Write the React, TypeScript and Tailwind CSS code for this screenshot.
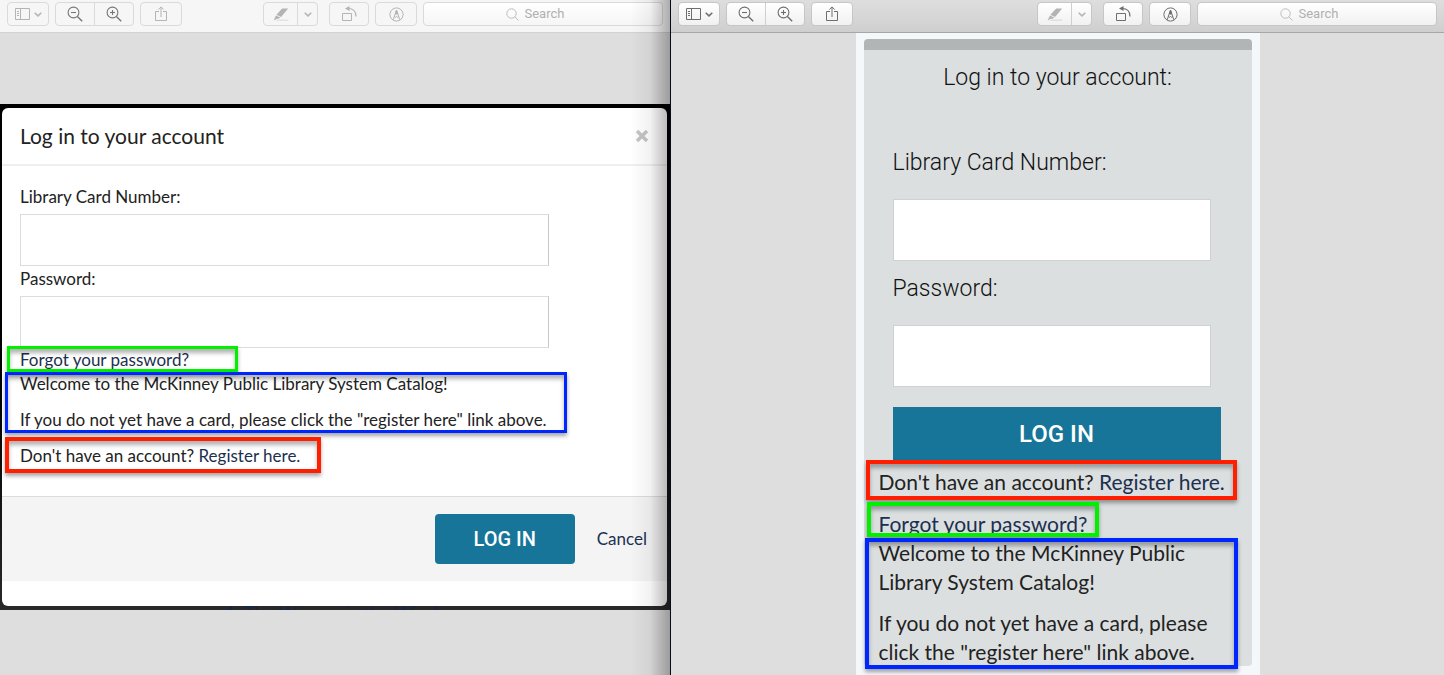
import { useId } from "react";
import type { ReactNode } from "react";
import clsx from "clsx";

function SidebarIcon() {
  return (
    <svg width="15" height="12" viewBox="0 0 15 12" fill="none" stroke="currentColor" aria-hidden="true">
      <path d="M.5.5h14v11H.5zM5.5.5v11M2 3.5h2M2 5.5h2M2 7.5h2" />
    </svg>
  );
}

function ChevronIcon() {
  return (
    <svg width="8" height="5" viewBox="0 0 8 5" fill="none" stroke="currentColor" strokeWidth="1.5" aria-hidden="true">
      <path d="M.7.7 4 3.9 7.3.7" />
    </svg>
  );
}

function MagnifierIcon({ plus = false }: { plus?: boolean }) {
  return (
    <svg width="16" height="16" viewBox="0 0 16 16" fill="none" stroke="currentColor" strokeWidth="1.1" aria-hidden="true">
      <circle cx="6.5" cy="6.5" r="5.4" />
      <path d="m10.4 10.4 4.8 4.8" strokeWidth="1.4" />
      <path d="M4 6.5h5" />
      {plus && <path d="M6.5 4v5" />}
    </svg>
  );
}

function ShareIcon() {
  return (
    <svg width="12" height="16" viewBox="0 0 12 16" fill="none" stroke="currentColor" aria-hidden="true">
      <path d="M4 5.5H.5v9h11v-9H8M6 11V1M3.3 3.6 6 .9l2.7 2.7" />
    </svg>
  );
}

function MarkerIcon() {
  return (
    <svg width="16" height="13" viewBox="0 0 16 13" fill="currentColor" aria-hidden="true">
      <path d="M9.2.6h6L8.1 8.9 3.4 6.8zM3 7.4l4.3 2-1.8 1.4-2.1.2L.6 12.4l1.6-3.3z" />
      <path d="M4.5 11.7h10.8v.8H2.5z" opacity=".6" />
    </svg>
  );
}

function RotateIcon() {
  return (
    <svg width="15" height="16" viewBox="0 0 15 16" fill="none" stroke="currentColor" aria-hidden="true">
      <path d="M.5 7.5h9v7h-9z" />
      <path d="M6 2.5c4.5 0 8 2.5 8 8" strokeWidth="1.2" />
      <path d="M3 2.5 7.5 0v5z" fill="currentColor" stroke="none" />
    </svg>
  );
}

function MarkupIcon() {
  return (
    <svg width="15" height="15" viewBox="0 0 15 15" fill="none" stroke="currentColor" aria-hidden="true">
      <circle cx="7.5" cy="7.5" r="6.6" />
      <path d="M4.2 12.8 7.5 3l3.3 9.8M5.3 9.5l1.4.8.8-.8.8.8 1.4-.8" />
      <path d="M7.5 3.2 6.5 7h2z" fill="currentColor" />
    </svg>
  );
}

function SearchIcon() {
  return (
    <svg width="13" height="13" viewBox="0 0 13 13" fill="none" stroke="currentColor" aria-hidden="true">
      <circle cx="5.5" cy="5.5" r="4.7" />
      <path d="m9 9 3.5 3.5" />
    </svg>
  );
}

function ToolButton({ label, className, children }: { label: string; className?: string; children: ReactNode }) {
  return (
    <button type="button" aria-label={label} className={clsx("flex h-full items-center justify-center", className)}>
      {children}
    </button>
  );
}

function Toolbar({ active = false }: { active?: boolean }) {
  const group = clsx(
    "flex h-6 shrink-0 items-center rounded border",
    active ? "border-[#c6c6c6] bg-linear-to-b from-white to-[#f1f1f1]" : "border-[#dadada] bg-[#f6f6f6]",
  );
  const tone = active ? "text-[#6e6e6e]" : "text-[#b4b4b4]";
  const zoomTone = active ? "text-[#6e6e6e]" : "text-[#777777]";
  const split = active ? "border-r border-[#cfcfcf]" : "border-r border-[#dadada]";
  return (
    <div
      role="toolbar"
      aria-label="Viewer tools"
      className={clsx(
        "flex h-[33px] items-start border-b px-[7px] pt-0.5",
        active ? "border-[#a6a6a6] bg-linear-to-b from-[#dedede] to-[#cfcfcf]" : "border-[#d2d2d2] bg-[#f6f6f6]",
      )}
    >
      <div className={clsx(group, tone, "w-[42px]")}>
        <ToolButton label="Sidebar" className="w-full gap-1">
          <SidebarIcon />
          <ChevronIcon />
        </ToolButton>
      </div>
      <div className={clsx(group, zoomTone, "ml-1.5 w-[79px]")}>
        <ToolButton label="Zoom out" className={clsx("flex-1", split)}>
          <MagnifierIcon />
        </ToolButton>
        <ToolButton label="Zoom in" className="flex-1">
          <MagnifierIcon plus />
        </ToolButton>
      </div>
      <div className={clsx(group, tone, "ml-1.5 w-[42px]")}>
        <ToolButton label="Share" className="w-full">
          <ShareIcon />
        </ToolButton>
      </div>
      <div className={clsx(group, "ml-auto w-[55px] text-[#b4b4b4]")}>
        <ToolButton label="Highlight" className={clsx("w-[34px]", split)}>
          <MarkerIcon />
        </ToolButton>
        <ToolButton label="Highlight colours" className="flex-1">
          <ChevronIcon />
        </ToolButton>
      </div>
      <div className={clsx(group, tone, "ml-[11px] w-10")}>
        <ToolButton label="Rotate" className="w-full">
          <RotateIcon />
        </ToolButton>
      </div>
      <div className={clsx(group, tone, "ml-1.5 w-[42px]")}>
        <ToolButton label="Markup" className="w-full">
          <MarkupIcon />
        </ToolButton>
      </div>
      <label
        className={clsx(
          group,
          "ml-1.5 w-60 justify-center gap-1.5 text-[#bcbcbc]",
          !active && "bg-linear-to-b from-white to-[#f6f6f6]",
        )}
      >
        <SearchIcon />
        <input
          type="text"
          aria-label="Search"
          placeholder="Search"
          className="w-14 bg-transparent font-[Roboto,sans-serif] text-[13px] leading-5 outline-none placeholder:text-[#b0b0b0]"
        />
      </label>
    </div>
  );
}

/** Coloured rectangle drawn over the block that it annotates. */
function Callout({ className }: { className: string }) {
  return (
    <span
      aria-hidden="true"
      className={clsx(
        "pointer-events-none absolute shadow-[0_3px_4px_rgba(0,0,0,0.35),inset_0_4px_4px_rgba(0,0,0,0.3)]",
        className,
      )}
    />
  );
}

function Field({
  label,
  type,
  labelClass,
  inputClass,
}: {
  label: string;
  type: string;
  labelClass: string;
  inputClass: string;
}) {
  const id = useId();
  return (
    <div>
      <label htmlFor={id} className={clsx("block", labelClass)}>
        {label}
      </label>
      <input id={id} type={type} className={clsx("block max-w-full bg-white px-3 outline-none", inputClass)} />
    </div>
  );
}

const link = "text-[#1b3050]";

function DesktopDialog() {
  const label = "pt-0.5 pb-1.5 leading-[22px] text-[#222]";
  const input = "h-[52px] w-[529px] border border-[#dcdcdc] border-r-[#c8c8c8]";
  return (
    <div className="bg-linear-to-b from-black from-30% to-[#29292b] pt-1 pr-[3px] pl-0.5">
      <section className="rounded-md bg-white pb-[25px]">
        <header className="flex h-[58px] items-center justify-between border-b-2 border-[#efefef] px-[18px]">
          <h1 className="text-[21px] text-[#222]">Log in to your account</h1>
          <button type="button" aria-label="Close" className="text-[#c4c4c4]">
            <svg width="14" height="14" viewBox="0 0 14 14" stroke="currentColor" strokeWidth="3.4" aria-hidden="true">
              <path d="m2 2 10 10M12 2 2 12" />
            </svg>
          </button>
        </header>
        <form onSubmit={(e) => e.preventDefault()} className="text-[17px]">
          <div className="px-[18px] pt-[18px] pb-7">
            <Field label="Library Card Number:" type="text" labelClass={label} inputClass={input} />
            <Field label="Password:" type="password" labelClass={label} inputClass={input} />
            <p className="relative leading-6">
              <a href="#forgot" className={link}>Forgot your password?</a>
              <Callout className="-top-0.5 -left-[13px] h-[26px] w-[231px] border-3 border-[#00f000]" />
            </p>
            <div className="relative leading-6 text-[#222]">
              <p>Welcome to the McKinney Public Library System Catalog!</p>
              <p className="mt-3">If you do not yet have a card, please click the "register here" link above.</p>
              <Callout className="top-0 -left-[15px] h-[61px] w-[562px] border-3 border-[#0026ff]" />
            </div>
            <p className="relative mt-3 leading-6 text-[#222]">
              Don't have an account? <a href="#register" className={link}>Register here.</a>
              <Callout className="-top-[7px] -left-[15px] h-9 w-[316px] border-4 border-[#ff1e00]" />
            </p>
          </div>
          <footer className="flex h-[85px] items-center justify-end gap-[22px] border-t border-[#dcdcdc] bg-[#f4f4f4] px-5">
            <button
              type="submit"
              className="h-[50px] w-[140px] rounded bg-[#167599] font-[Roboto,sans-serif] text-xl font-medium text-white"
            >
              LOG IN
            </button>
            <a href="#cancel" className={link}>Cancel</a>
          </footer>
        </form>
      </section>
      <div className="h-1 overflow-hidden pl-[223px] text-lg leading-3 whitespace-nowrap text-[#14284a]">
        1. The Woman in the Window
      </div>
    </div>
  );
}

function MobileForm() {
  const label = "pt-1 pb-3 font-[Roboto,sans-serif] text-[23px] leading-[48px] font-light text-[#111]";
  const input = "h-[62px] w-[318px] border border-[#cfd2d3]";
  return (
    <div className="mx-auto w-[404px] max-w-full flex-1 bg-[#f4f8fb] px-2 pt-1.5">
      <section className="rounded-sm border-t-[11px] border-[#b1b5b6] bg-[#dbdfe0]">
        <h2 className="pt-3 text-center font-[Roboto,sans-serif] text-[23px] leading-8 font-light text-[#111]">
          Log in to your account:
        </h2>
        <form onSubmit={(e) => e.preventDefault()} className="px-[15px] text-[21px] leading-[29px]">
          <div className="pt-[41px] pr-4 pl-[14px]">
            <Field label="Library Card Number:" type="text" labelClass={label} inputClass={input} />
            <Field label="Password:" type="password" labelClass={label} inputClass={input} />
            <button
              type="submit"
              className="mt-5 block h-[54px] w-full bg-[#167599] font-[Roboto,sans-serif] text-2xl font-medium text-white"
            >
              LOG IN
            </button>
          </div>
          <p className="relative mt-1.5 text-[#222]">
            Don't have an account? <a href="#register" className={link}>Register here.</a>
            <Callout className="-top-[7px] -left-[13px] h-10 w-[371px] border-4 border-[#ff1e00]" />
          </p>
          <p className="relative mt-[13px]">
            <a href="#forgot" className={link}>Forgot your password?</a>
            <Callout className="-top-[7px] -left-3 h-[35px] w-[232px] border-4 border-[#00f000]" />
          </p>
          <div className="relative text-[#222]">
            <p className="pr-5">Welcome to the McKinney Public Library System Catalog!</p>
            <p className="mt-3 pr-5">If you do not yet have a card, please click the "register here" link above.</p>
            <Callout className="top-0 -left-3.5 h-[131px] w-[373px] border-4 border-[#0026ff]" />
          </div>
        </form>
      </section>
    </div>
  );
}

export default function App() {
  return (
    <div className="grid min-h-screen grid-cols-[670fr_1px_773fr] overflow-hidden bg-[#dedede] font-[Lato,sans-serif]">
      <main className="relative min-w-0">
        <Toolbar />
        <div className="pt-[71px]">
          <DesktopDialog />
        </div>
        <div
          aria-hidden="true"
          className="pointer-events-none absolute inset-y-0 right-0 w-10 bg-linear-to-r from-transparent via-black/5 to-black/30"
        />
      </main>
      <div className="bg-[#050a1c]" />
      <aside className="flex min-w-0 flex-col">
        <Toolbar active />
        <MobileForm />
      </aside>
    </div>
  );
}
